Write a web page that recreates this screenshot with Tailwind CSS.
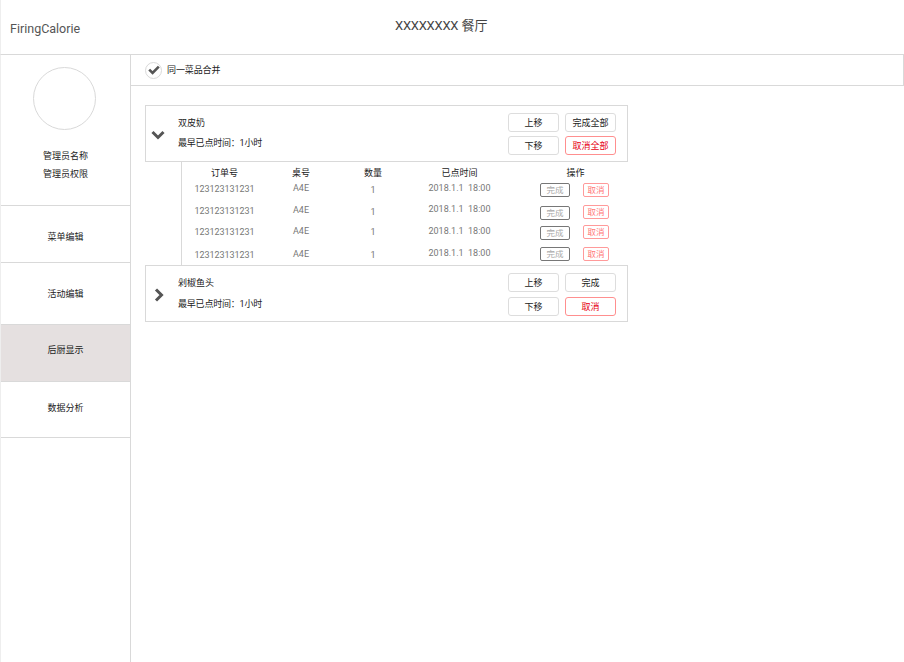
<!DOCTYPE html>
<html lang="en">

<head>
    <meta charset="UTF-8">
    <title>FiringCalorie</title>
    <script src="https://cdn.jsdelivr.net/npm/@tailwindcss/browser@4"></script>
</head>

<body class="h-[662px] w-[904px] overflow-hidden bg-white text-[9px] leading-[12px] text-[#222] font-['Roboto','Noto_Sans_CJK_SC',sans-serif]">
    <header class="relative flex h-[55px] items-center border-b border-l border-b-[#d9d9d9] border-l-[#eeeeee] pt-[3px]">
        <div class="pl-[9px] text-[12.5px] text-[#555]">FiringCalorie</div>
        <div class="absolute left-[394px] top-[17px] text-[13px] leading-[18px] text-[#444]"><span class="tracking-[-0.25px]">XXXXXXXX</span> 餐厅</div>
    </header>

    <div class="flex h-[607px]">
        <aside class="flex w-[131px] flex-col border-x border-l-[#eeeeee] border-r-[#d9d9d9]">
            <div class="flex h-[151px] flex-col items-center border-b border-[#d9d9d9] pt-[12px] pr-[2px]">
                <div class="h-[63px] w-[63px] rounded-full border border-[#d9d9d9]"></div>
                <div class="mt-[20px] pl-[2px]">管理员名称</div>
                <div class="mt-[6px] pl-[2px]">管理员权限</div>
            </div>
            <div class="flex h-[57px] items-center justify-center border-b border-[#d9d9d9] pt-[5px]">菜单编辑</div>
            <div class="flex h-[62px] items-center justify-center border-b border-[#d9d9d9]">活动编辑</div>
            <div class="flex h-[57px] items-center justify-center border-b border-[#d9d9d9] bg-[#e5e0e0] pb-[7px]">后厨显示</div>
            <div class="flex h-[56px] items-center justify-center border-b border-[#d9d9d9] pb-[3px]">数据分析</div>
        </aside>

        <main class="flex-1">
            <div class="flex h-[31px] items-center gap-[5px] border-r border-b border-[#d9d9d9] pl-[14px]">
                <span class="flex h-[17px] w-[17px] items-center justify-center rounded-full border border-[#d9d9d9]">
                    <svg width="12" height="10" viewBox="0 0 12 10" fill="none"><polyline points="1.2,4.6 4.6,8 10.8,1.6" stroke="#555" stroke-width="2.6"/></svg>
                </span>
                <span class="tracking-[-0.1px]">同一菜品合并</span>
            </div>

            <div class="ml-[14px] mt-[19px] w-[483px]">
                <!-- 双皮奶 -->
                <div class="flex h-[57px] border border-[#d9d9d9]">
                    <div class="flex w-[32px] items-center justify-center pt-[2px] pr-[8px]">
                        <svg width="14" height="10" viewBox="0 0 14 10" fill="none"><polyline points="1.5,2 7,7.5 12.5,2" stroke="#555" stroke-width="3"/></svg>
                    </div>
                    <div class="flex-1">
                        <div class="mt-[11px]">双皮奶</div>
                        <div class="mt-[8px] tracking-[-0.2px]">最早已点时间：1小时</div>
                    </div>
                    <div class="mr-[11px] mt-[7px] grid h-[42px] grid-cols-[51px_51px] gap-x-[6px] gap-y-[4px]">
                        <button class="h-[19px] rounded-[3px] border border-[#dddddd]">上移</button>
                        <button class="h-[19px] rounded-[3px] border border-[#dddddd]">完成全部</button>
                        <button class="h-[19px] rounded-[3px] border border-[#dddddd]">下移</button>
                        <button class="h-[19px] rounded-[3px] border border-[#ff8f8f] text-[#e60012]">取消全部</button>
                    </div>
                </div>

                <!-- 订单明细 -->
                <div class="ml-[36px] h-[103px] border-l border-[#d9d9d9] text-center text-[#777]">
                    <div class="grid h-[20px] grid-cols-[85px_68px_76px_97px_1fr] text-[#222]">
                        <div class="mt-[5px]">订单号</div>
                        <div class="mt-[5px]">桌号</div>
                        <div class="mt-[5px]">数量</div>
                        <div class="mt-[5px]">已点时间</div>
                        <div class="mt-[5px] pl-[15px]">操作</div>
                    </div>
                    <div class="grid h-[21px] grid-cols-[85px_68px_76px_97px_1fr]">
                        <div class="mt-[1px] tracking-[-0.05px]">123123131231</div>
                        <div>A4E</div>
                        <div class="mt-[2px]">1</div>
                        <div>2018.1.1&nbsp;&nbsp;18:00</div>
                        <div class="mt-[1px] flex gap-[13px] pl-[32px] text-[8.5px]">
                            <button class="h-[14px] w-[30px] rounded-[2px] border border-[#777] text-[#aaa]">完成</button>
                            <button class="h-[14px] w-[26px] rounded-[2px] border border-[#ff9a9a] text-[#f77]">取消</button>
                        </div>
                    </div>
                    <div class="grid h-[21px] grid-cols-[85px_68px_76px_97px_1fr]">
                        <div class="mt-[2px] tracking-[-0.05px]">123123131231</div>
                        <div class="mt-[1px]">A4E</div>
                        <div class="mt-[3px]">1</div>
                        <div>2018.1.1&nbsp;&nbsp;18:00</div>
                        <div class="mt-[3px] flex gap-[13px] pl-[32px] text-[8.5px]">
                            <button class="h-[14px] w-[30px] rounded-[2px] border border-[#777] text-[#aaa]">完成</button>
                            <button class="h-[14px] w-[26px] -mt-[1px] rounded-[2px] border border-[#ff9a9a] text-[#f77]">取消</button>
                        </div>
                    </div>
                    <div class="grid h-[22px] grid-cols-[85px_68px_76px_97px_1fr]">
                        <div class="mt-[2px] tracking-[-0.05px]">123123131231</div>
                        <div class="mt-[1px]">A4E</div>
                        <div class="mt-[2px]">1</div>
                        <div class="mt-[1px]">2018.1.1&nbsp;&nbsp;18:00</div>
                        <div class="mt-[2px] flex gap-[13px] pl-[32px] text-[8.5px]">
                            <button class="h-[14px] w-[30px] rounded-[2px] border border-[#777] text-[#aaa]">完成</button>
                            <button class="h-[14px] w-[26px] -mt-[1px] rounded-[2px] border border-[#ff9a9a] text-[#f77]">取消</button>
                        </div>
                    </div>
                    <div class="grid h-[19px] grid-cols-[85px_68px_76px_97px_1fr]">
                        <div class="mt-[3px] tracking-[-0.05px]">123123131231</div>
                        <div class="mt-[2px]">A4E</div>
                        <div class="mt-[3px]">1</div>
                        <div class="mt-[1px]">2018.1.1&nbsp;&nbsp;18:00</div>
                        <div class="mt-[1px] flex gap-[13px] pl-[32px] text-[8.5px]">
                            <button class="h-[14px] w-[30px] rounded-[2px] border border-[#777] text-[#aaa]">完成</button>
                            <button class="h-[14px] w-[26px] rounded-[2px] border border-[#ff9a9a] text-[#f77]">取消</button>
                        </div>
                    </div>
                </div>

                <!-- 剁椒鱼头 -->
                <div class="flex h-[57px] border border-[#d9d9d9]">
                    <div class="flex w-[32px] items-center justify-center pt-[2px] pr-[6px]">
                        <svg width="10" height="14" viewBox="0 0 10 14" fill="none"><polyline points="2,1.5 7.5,7 2,12.5" stroke="#555" stroke-width="3"/></svg>
                    </div>
                    <div class="flex-1">
                        <div class="mt-[11px]">剁椒鱼头</div>
                        <div class="mt-[9px] tracking-[-0.2px]">最早已点时间：1小时</div>
                    </div>
                    <div class="mr-[11px] mt-[7px] grid h-[42px] grid-cols-[51px_51px] gap-x-[6px] gap-y-[5px]">
                        <button class="h-[19px] rounded-[3px] border border-[#dddddd]">上移</button>
                        <button class="h-[19px] rounded-[3px] border border-[#dddddd]">完成</button>
                        <button class="h-[19px] rounded-[3px] border border-[#dddddd]">下移</button>
                        <button class="h-[19px] rounded-[3px] border border-[#ff8f8f] text-[#e60012]">取消</button>
                    </div>
                </div>
            </div>
        </main>
    </div>
</body>

</html>
